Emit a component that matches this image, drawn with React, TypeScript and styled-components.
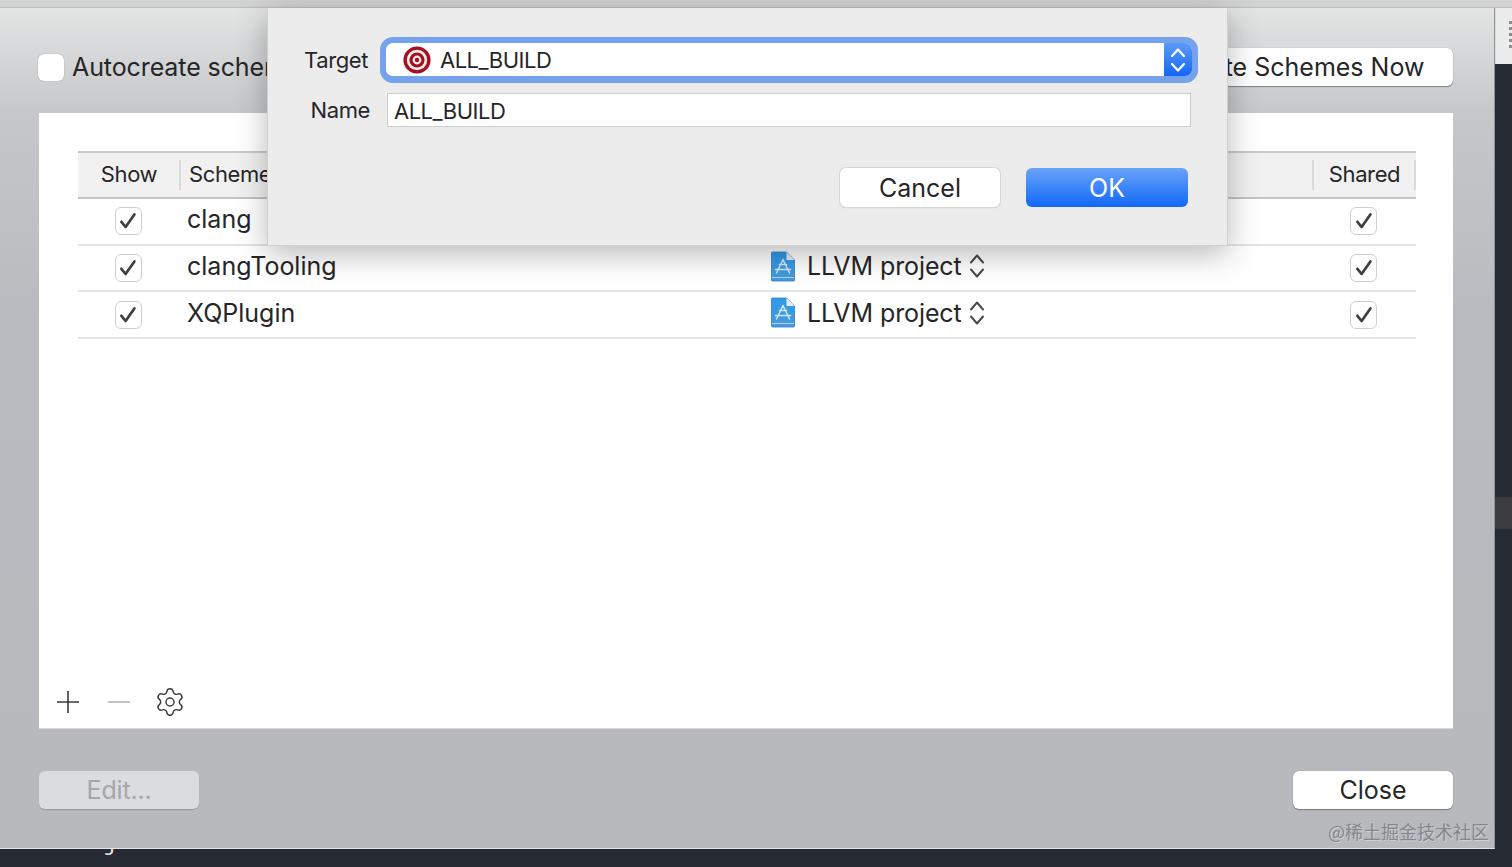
import React from 'react';
import styled, { createGlobalStyle } from 'styled-components';
import { Settings } from 'lucide-react';

const GlobalStyle = createGlobalStyle`
  html, body {
    margin: 0;
    padding: 0;
    background: #262a33;
    overflow: hidden;
  }
  * {
    box-sizing: border-box;
  }
`;

const schemes = [
  { name: 'clang', covered: true },
  { name: 'clangTooling', covered: false },
  { name: 'XQPlugin', covered: false },
];

const CheckIcon = () => (
  <svg width="18" height="18" viewBox="0 0 18 18" fill="none">
    <path d="M2.4 9.8 L6.6 15 L15.4 2.4" stroke="#3f3f42" strokeWidth="2.7" strokeLinecap="round" strokeLinejoin="round" />
  </svg>
);

const TargetIcon = () => (
  <svg width="28" height="28" viewBox="0 0 28 28">
    <circle cx="14" cy="14" r="13.6" fill="#a5101f" />
    <circle cx="14" cy="14" r="10.2" fill="#fbeeee" />
    <circle cx="14" cy="14" r="7.6" fill="#a5101f" />
    <circle cx="14" cy="14" r="4.4" fill="#fbeeee" />
    <circle cx="14" cy="14" r="2.2" fill="#a5101f" />
  </svg>
);

const ProjectIcon = () => (
  <svg width="24" height="31" viewBox="0 0 24 31">
    <defs>
      <linearGradient id="docFill" x1="0" y1="0" x2="0" y2="1">
        <stop offset="0" stopColor="#2c9bea" />
        <stop offset="1" stopColor="#4a9ada" />
      </linearGradient>
    </defs>
    <path d="M1.5 1 H15.5 L23.5 9 V29 a1 1 0 0 1 -1 1 H1.5 a1 1 0 0 1 -1 -1 V2 a1 1 0 0 1 1 -1 Z" fill="url(#docFill)" stroke="#2f7fc4" strokeWidth="0.8" />
    <path d="M15.5 1 V9 H23.5 Z" fill="#e6edf3" />
    <path d="M12 8.5 L5.5 22 M12 8.5 L18.5 22 M4.5 18.5 H19.5 M8.5 13.5 H15.5" stroke="#cfe8fa" strokeWidth="1.5" fill="none" strokeLinecap="round" />
    <path d="M1 26.5 H23" stroke="#a9d6f5" strokeWidth="1" />
  </svg>
);

const UpDownIcon = () => (
  <svg width="16" height="26" viewBox="0 0 16 26" fill="none">
    <path d="M2 9.5 L8 2.5 L14 9.5 M2 16.5 L8 23.5 L14 16.5" stroke="#4b4b4d" strokeWidth="2" strokeLinecap="round" strokeLinejoin="round" />
  </svg>
);

const App: React.FC = () => {
  return (
    <Screen>
      <GlobalStyle />
      <TopStrip />
      <Middle>
        <Sheet>
          <TopRow>
            <AutoLabel>
              <EmptyBox />
              Autocreate schemes
            </AutoLabel>
            <WhiteButton $width={364}>Autocreate Schemes Now</WhiteButton>
          </TopRow>

          <Panel>
            <Table>
              <HeaderRow>
                <HeaderCell $center>Show</HeaderCell>
                <HeaderCell>Scheme</HeaderCell>
                <HeaderCell $center>Shared</HeaderCell>
              </HeaderRow>
              {schemes.map((scheme) => (
                <Row key={scheme.name}>
                  <CheckCell>
                    <CheckBox><CheckIcon /></CheckBox>
                  </CheckCell>
                  <NameCell>{scheme.name}</NameCell>
                  <ContainerCell>
                    {!scheme.covered && (
                      <>
                        <ProjectIcon />
                        <ContainerName>LLVM project</ContainerName>
                        <UpDownIcon />
                      </>
                    )}
                  </ContainerCell>
                  <CheckCell>
                    <CheckBox><CheckIcon /></CheckBox>
                  </CheckCell>
                </Row>
              ))}
            </Table>
            <PanelTools>
              <svg width="24" height="24" viewBox="0 0 24 24">
                <path d="M1 12 H23 M12 1 V23" stroke="#3a3a3c" strokeWidth="1.6" />
              </svg>
              <svg width="24" height="24" viewBox="0 0 24 24">
                <path d="M1 12 H23" stroke="#b4b4b6" strokeWidth="1.6" />
              </svg>
              <GearIcon size={32} strokeWidth={1.1} color="#3d3d3f" />
            </PanelTools>
          </Panel>

          <BottomRow>
            <EditButton>Edit...</EditButton>
            <WhiteButton $width={160}>Close</WhiteButton>
          </BottomRow>

          <Watermark>@稀土掘金技术社区</Watermark>
        </Sheet>

        <SideColumn>
          <SideHandle>
            <HandleDots />
          </SideHandle>
          <SideEditor>
            <SideHighlight />
          </SideEditor>
        </SideColumn>
      </Middle>
      <BottomStrip>
        <ClippedCode>j</ClippedCode>
      </BottomStrip>

      <Dialog>
        <DialogForm>
          <FieldLabel $inset={2}>Target</FieldLabel>
          <TargetSelect>
            <TargetValue>
              <TargetIcon />
              ALL_BUILD
            </TargetValue>
            <SelectArrows>
              <svg width="18" height="30" viewBox="0 0 18 30" fill="none">
                <path d="M3 11 L9 4.5 L15 11 M3 19 L9 25.5 L15 19" stroke="#fff" strokeWidth="2.2" strokeLinecap="round" strokeLinejoin="round" />
              </svg>
            </SelectArrows>
          </TargetSelect>
          <FieldLabel $inset={0}>Name</FieldLabel>
          <NameInput>ALL_BUILD</NameInput>
        </DialogForm>
        <DialogActions>
          <CancelButton>Cancel</CancelButton>
          <OkButton>OK</OkButton>
        </DialogActions>
      </Dialog>
    </Screen>
  );
};

const Screen = styled.div`
  position: relative;
  width: 1512px;
  height: 867px;
  display: flex;
  flex-direction: column;
  overflow: hidden;
  background: #262a33;
  font-family: Inter, "Liberation Sans", sans-serif;
  color: #262628;
`;

const TopStrip = styled.div`
  height: 8px;
  flex: none;
  background: #d2d2d0;
  border-bottom: 1px solid #bdbdbd;
`;

const Middle = styled.div`
  flex: none;
  height: 841px;
  display: flex;
`;

const Sheet = styled.div`
  position: relative;
  width: 1495px;
  flex: none;
  padding: 40px 41px 0 39px;
  display: flex;
  flex-direction: column;
  background: linear-gradient(#e3e4e4 0, #c5c7c9 105px, #b9bbc0 300px, #b7b9bd 100%);
  border-bottom: 1px solid #e4e4e6;
  border-right: 1px solid #8f9298;
`;

const TopRow = styled.div`
  height: 38px;
  display: flex;
  justify-content: space-between;
  align-items: center;
`;

const AutoLabel = styled.div`
  display: flex;
  align-items: center;
  gap: 8px;
  margin-left: -1px;
  font-size: 25px;
  letter-spacing: -0.1px;
  white-space: nowrap;
`;

const EmptyBox = styled.span`
  width: 26px;
  height: 27px;
  background: #fff;
  border-radius: 6px;
  box-shadow: 0 0 1px rgba(0, 0, 0, 0.45);
`;

const WhiteButton = styled.div<{ $width: number }>`
  width: ${(p) => p.$width}px;
  height: 38px;
  display: flex;
  align-items: center;
  justify-content: center;
  background: #fff;
  border-radius: 6px;
  font-size: 25px;
  white-space: nowrap;
  box-shadow: 0 1px 1px rgba(0, 0, 0, 0.35), 0 0 1px rgba(0, 0, 0, 0.3);
`;

const Panel = styled.div`
  margin-top: 27px;
  height: 615px;
  background: #fff;
  padding: 38px 37px 0 39px;
  display: flex;
  flex-direction: column;
  justify-content: space-between;
  box-shadow: 0 1px 0 #d8d8da;
`;

const Table = styled.div`
  display: flex;
  flex-direction: column;
`;

const HeaderRow = styled.div`
  height: 48px;
  display: grid;
  grid-template-columns: 103px 1fr 102px;
  background: #f1f1f1;
  border-top: 2px solid #c9c9c9;
  border-bottom: 2px solid #c4c4c4;
`;

const HeaderCell = styled.div<{ $center?: boolean }>`
  position: relative;
  display: flex;
  align-items: center;
  justify-content: ${(p) => (p.$center ? 'center' : 'flex-start')};
  padding-left: ${(p) => (p.$center ? '0' : '8px')};
  padding-right: ${(p) => (p.$center ? '1px' : '0')};
  padding-bottom: 3px;
  font-size: 22px;
  letter-spacing: -0.4px;

  &::after {
    content: '';
    position: absolute;
    right: 0;
    top: 7px;
    bottom: 7px;
    width: 2px;
    background: #dadada;
  }
`;

const Row = styled.div`
  height: 46.7px;
  display: grid;
  grid-template-columns: 100px 593px 1fr 105px;
  align-items: center;
  border-bottom: 2px solid #e4e4e4;
`;

const CheckCell = styled.div`
  display: flex;
  justify-content: center;
`;

const CheckBox = styled.span`
  width: 27px;
  height: 28px;
  display: flex;
  align-items: center;
  justify-content: center;
  background: #fff;
  border: 1.5px solid #d0d0d0;
  border-radius: 6px;
`;

const NameCell = styled.div`
  padding-left: 9px;
  padding-bottom: 4px;
  font-size: 25px;
`;

const ContainerCell = styled.div`
  display: flex;
  align-items: center;
  gap: 12px;
  padding-bottom: 4px;
  font-size: 25px;
  letter-spacing: -0.1px;
`;

const ContainerName = styled.span`
  margin-right: -5px;
`;

const PanelTools = styled.div`
  height: 52px;
  margin-left: -22px;
  display: flex;
  align-items: center;
  gap: 27px;
`;

const GearIcon = styled(Settings)`
  margin-left: -4px;
`;

const BottomRow = styled.div`
  margin-top: 43px;
  display: flex;
  justify-content: space-between;
`;

const EditButton = styled.div`
  width: 160px;
  height: 38px;
  display: flex;
  align-items: center;
  justify-content: center;
  background: #dbdcdf;
  border-radius: 6px;
  color: #a5a6aa;
  font-size: 25px;
  letter-spacing: -0.2px;
  box-shadow: 0 1px 1px rgba(0, 0, 0, 0.18);
`;

const Watermark = styled.div`
  position: absolute;
  right: 5px;
  bottom: 5px;
  font-family: "Noto Sans CJK SC", sans-serif;
  font-size: 18px;
  line-height: 24px;
  color: #84868b;
  text-shadow: 1px 1px 0 #cfd0d3;
  white-space: nowrap;
`;

const SideColumn = styled.div`
  flex: 1;
  display: flex;
  flex-direction: column;
`;

const SideHandle = styled.div`
  height: 56px;
  display: flex;
  justify-content: flex-end;
  padding-top: 13px;
  background: #ececec;
  border-left: 1px solid #dcdcdc;
`;

const HandleDots = styled.div`
  width: 3px;
  height: 28px;
  background: repeating-linear-gradient(#8d8d8d 0 3px, transparent 3px 6px);
`;

const SideEditor = styled.div`
  flex: 1;
  padding-top: 433px;
  background: #262a33;
`;

const SideHighlight = styled.div`
  height: 32px;
  background: #3c3b3d;
`;

const BottomStrip = styled.div`
  flex: 1;
  overflow: hidden;
  background: #262a33;
  padding-left: 104px;
`;

const ClippedCode = styled.div`
  margin-top: -17px;
  font-family: "Liberation Mono", monospace;
  font-size: 22px;
  line-height: 26px;
  color: #e6e6e6;
`;

const Dialog = styled.div`
  position: absolute;
  left: 267px;
  top: 8px;
  width: 961px;
  height: 238px;
  padding: 29px 36px 0 0;
  display: flex;
  flex-direction: column;
  background: #ececec;
  border: 1px solid #d0d0d0;
  border-top: 0;
  box-shadow: 0 8px 30px rgba(0, 0, 0, 0.28);
`;

const DialogForm = styled.div`
  display: grid;
  grid-template-columns: 102px 1fr;
  column-gap: 17px;
  row-gap: 10px;
  align-items: center;
`;

const FieldLabel = styled.div<{ $inset: number }>`
  text-align: right;
  padding-right: ${(p) => p.$inset}px;
  font-size: 22px;
  letter-spacing: -0.4px;
`;

const TargetSelect = styled.div`
  height: 46px;
  margin: 0 -7px;
  display: flex;
  border: 6px solid #74a3ec;
  border-bottom-width: 7px;
  border-radius: 13px;
  overflow: hidden;
  background: #fff;
`;

const TargetValue = styled.div`
  flex: 1;
  display: flex;
  align-items: center;
  gap: 9px;
  padding-left: 17px;
  font-size: 22px;
  letter-spacing: -0.5px;
`;

const SelectArrows = styled.div`
  width: 28px;
  display: flex;
  align-items: center;
  justify-content: center;
  background: linear-gradient(#5c9bf7, #1566f5);
`;

const NameInput = styled.div`
  height: 34px;
  display: flex;
  align-items: center;
  padding-left: 6px;
  padding-top: 1px;
  background: #fff;
  border: 1.5px solid #cdcdcd;
  font-size: 22px;
  letter-spacing: -0.5px;
`;

const DialogActions = styled.div`
  margin-top: 41px;
  display: flex;
  justify-content: flex-end;
  gap: 26px;
  padding-right: 3px;
`;

const CancelButton = styled.div`
  width: 160px;
  height: 39px;
  display: flex;
  align-items: center;
  justify-content: center;
  background: #fff;
  border-radius: 6px;
  font-size: 25px;
  box-shadow: 0 0 0 1px #d4d4d4, 0 1px 1px rgba(0, 0, 0, 0.2);
`;

const OkButton = styled.div`
  width: 162px;
  height: 39px;
  display: flex;
  align-items: center;
  justify-content: center;
  background: linear-gradient(#6aa3f8, #1268f8);
  border-radius: 6px;
  color: #fff;
  font-size: 25px;
`;

export default App;
